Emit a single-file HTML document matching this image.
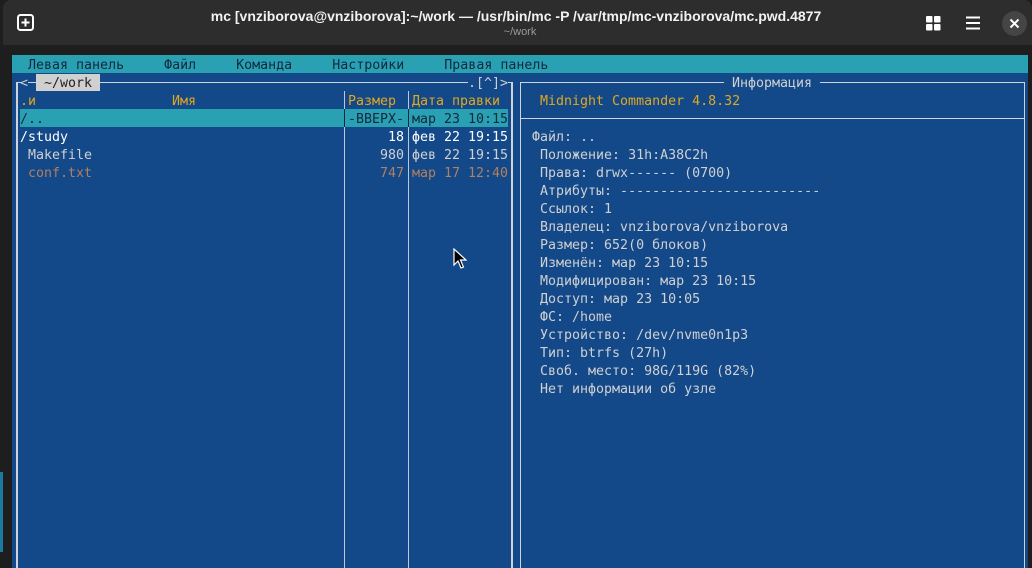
<!DOCTYPE html>
<html><head><meta charset="utf-8"><style>
*{margin:0;padding:0;box-sizing:border-box}
body{width:1032px;height:568px;overflow:hidden;background:#1e1e1e;position:relative;font-family:"DejaVu Sans Mono","Liberation Mono",monospace}
.hdr{position:absolute;left:3px;top:0;width:1029px;height:45px;background:#2d2d2d;border-radius:8px 8px 0 0}
.t{position:absolute;font-size:13.3px;line-height:18px;white-space:pre;color:#d0d0d0;margin-top:2px}
.term{position:absolute;left:12px;top:55px;width:1016px;height:513px;background:#134889}
.l{position:absolute;background:#cfd3dc}
</style></head><body>
<div style="position:absolute;left:0;top:472px;width:3px;height:80px;background:#1a7aa0"></div>
<div class="hdr"></div>
<svg style="position:absolute;left:17px;top:14px" width="18" height="18" viewBox="0 0 18 18"><rect x="1" y="1" width="15" height="15" rx="2.5" fill="none" stroke="#fff" stroke-width="2"/><path d="M8.5 4.5v8M4.5 8.5h8" stroke="#fff" stroke-width="2"/></svg>
<div style="position:absolute;left:0;width:1032px;top:8px;text-align:center;font:bold 14px 'Liberation Sans',sans-serif;color:#f2f2f2">mc [vnziborova@vnziborova]:~/work — /usr/bin/mc -P /var/tmp/mc-vnziborova/mc.pwd.4877</div>
<div style="position:absolute;left:0;width:1040px;top:26px;text-align:center;font:11px 'Liberation Sans',sans-serif;color:#9a9a9a">~/work</div>
<svg style="position:absolute;left:926px;top:16px" width="15" height="15"><rect x="0" y="0" width="6.5" height="6.5" rx="1" fill="#fff"/><rect x="8" y="0" width="6.5" height="6.5" rx="1" fill="#fff"/><rect x="0" y="8" width="6.5" height="6.5" rx="1" fill="#fff"/><rect x="8" y="8" width="6.5" height="6.5" rx="1" fill="#fff"/></svg>
<svg style="position:absolute;left:966px;top:16px" width="15" height="14"><path d="M0 1.5h14M0 7h14M0 12.5h14" stroke="#fff" stroke-width="2"/></svg>
<div style="position:absolute;left:1002px;top:11px;width:25px;height:25px;border-radius:50%;background:#454545"></div>
<svg style="position:absolute;left:1009px;top:18px" width="11" height="11"><path d="M1.5 1.5l8 8M9.5 1.5l-8 8" stroke="#fff" stroke-width="2"/></svg>

<div class="term"></div>
<div style="position:absolute;left:12px;top:55px;width:1016px;height:18px;background:#2aa1b3"></div>
<div class="t" style="left:12px;top:55px;color:#13283f">  Левая панель     Файл     Команда     Настройки     Правая панель</div>

<div class="l" style="left:16px;top:82px;width:2px;height:486px"></div>
<div class="l" style="left:16px;top:82px;width:5px;height:1px"></div>
<div class="l" style="left:28px;top:82px;width:8px;height:1px"></div>
<div class="l" style="left:100px;top:82px;width:368px;height:1px"></div>
<div class="l" style="left:508px;top:82px;width:5px;height:1px"></div>
<div class="l" style="left:511px;top:82px;width:2px;height:486px"></div>
<div class="l" style="left:344px;top:91px;width:1px;height:477px;background:#bfc6d6"></div>
<div class="l" style="left:408px;top:91px;width:1px;height:477px;background:#bfc6d6"></div>
<div class="t" style="left:20px;top:73px">&lt;</div>
<div style="position:absolute;left:36px;top:74px;width:64px;height:17px;background:#d0d0d0"></div>
<div class="t" style="left:36px;top:73px;color:#222"> ~/work </div>
<div class="t" style="left:468px;top:73px">.[^]&gt;</div>

<div class="t" style="left:20px;top:91px;color:#e0a820">.и</div>
<div class="t" style="left:172px;top:91px;color:#e0a820">Имя</div>
<div class="t" style="left:348px;top:91px;color:#e0a820">Размер</div>
<div class="t" style="left:412px;top:91px;color:#e0a820">Дата правки</div>

<div style="position:absolute;left:20px;top:109px;width:488px;height:18px;background:#2aa1b3"></div>
<div style="position:absolute;left:344px;top:109px;width:1px;height:18px;background:#13283f"></div>
<div style="position:absolute;left:408px;top:109px;width:1px;height:18px;background:#13283f"></div>
<div class="t" style="left:20px;top:109px;color:#13283f">/..</div>
<div class="t" style="left:348px;top:109px;color:#13283f">-ВВЕРХ-</div>
<div class="t" style="left:412px;top:109px;color:#13283f">мар 23 10:15</div>

<div class="t" style="left:20px;top:127px;color:#fff">/study</div>
<div class="t" style="left:388px;top:127px;color:#fff">18</div>
<div class="t" style="left:412px;top:127px;color:#fff">фев 22 19:15</div>
<div class="t" style="left:28px;top:145px">Makefile</div>
<div class="t" style="left:380px;top:145px">980</div>
<div class="t" style="left:412px;top:145px">фев 22 19:15</div>
<div class="t" style="left:28px;top:163px;color:#b08060">conf.txt</div>
<div class="t" style="left:380px;top:163px;color:#b08060">747</div>
<div class="t" style="left:412px;top:163px;color:#b08060">мар 17 12:40</div>

<div class="l" style="left:520px;top:82px;width:1px;height:486px"></div>
<div class="l" style="left:1024px;top:82px;width:1px;height:486px"></div>
<div class="l" style="left:520px;top:82px;width:204px;height:1px"></div>
<div class="l" style="left:820px;top:82px;width:205px;height:1px"></div>
<div class="l" style="left:520px;top:118px;width:505px;height:1px"></div>
<div class="t" style="left:732px;top:73px">Информация</div>
<div class="t" style="left:540px;top:91px;color:#e0a820">Midnight Commander 4.8.32</div>
<div class="t" style="left:532px;top:127px">Файл: ..
 Положение: 31h:A38C2h
 Права: drwx------ (0700)
 Атрибуты: -------------------------
 Ссылок: 1
 Владелец: vnziborova/vnziborova
 Размер: 652(0 блоков)
 Изменён: мар 23 10:15
 Модифицирован: мар 23 10:15
 Доступ: мар 23 10:05
 ФС: /home
 Устройство: /dev/nvme0n1p3
 Тип: btrfs (27h)
 Своб. место: 98G/119G (82%)
 Нет информации об узле</div>

<svg style="position:absolute;left:453px;top:248px" width="14" height="22" viewBox="0 0 14 22"><path d="M1 1v16l4-4 3 7 2.5-1-3-7h5.5z" fill="#000" stroke="#fff" stroke-width="1.2"/></svg>
</body></html>
